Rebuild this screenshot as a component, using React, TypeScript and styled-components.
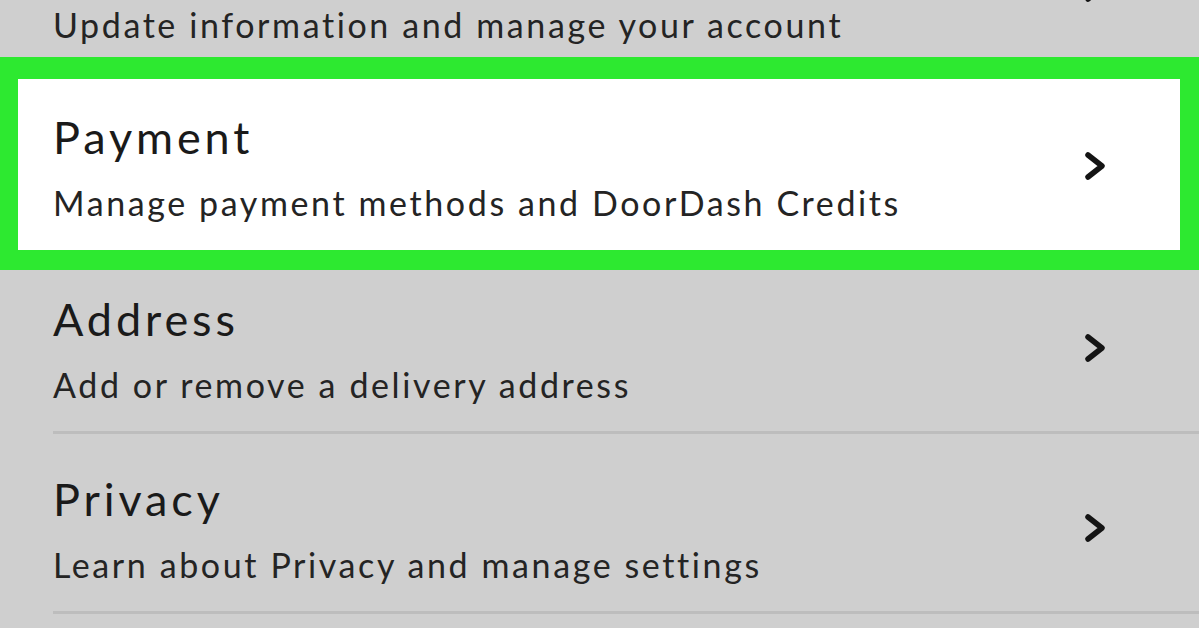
import React from 'react'
import styled, {createGlobalStyle} from 'styled-components'

const GlobalStyle = createGlobalStyle`
html, body {
  margin: 0;
  padding: 0;
  background: #cfcfcf;
}
body {
  font-family: Lato, "Noto Sans", sans-serif;
}
`

const items = [
  {title: 'Account', subtitle: 'Update information and manage your account'},
  {title: 'Payment', subtitle: 'Manage payment methods and DoorDash Credits', active: true},
  {title: 'Address', subtitle: 'Add or remove a delivery address'},
  {title: 'Privacy', subtitle: 'Learn about Privacy and manage settings'},
]

const Chevron = () => (
  <svg width="24" height="36" viewBox="0 0 24 36" fill="none">
    <polyline
      points="5,7 19,18 5,29"
      stroke="#141414"
      strokeWidth="5.5"
      strokeLinecap="round"
      strokeLinejoin="round"
    />
  </svg>
)

export default function App() {
  return (
    <>
      <GlobalStyle />
      <SScreen>
        <SList>
          {items.map((item, id) =>
            item.active ? (
              <SHighlight key={id}>
                <SRow $framed>
                  <SText>
                    <STitle>{item.title}</STitle>
                    <SSub>{item.subtitle}</SSub>
                  </SText>
                  <SArrow>
                    <Chevron />
                  </SArrow>
                </SRow>
              </SHighlight>
            ) : (
              <SRow key={id}>
                <SText>
                  <STitle>{item.title}</STitle>
                  <SSub>{item.subtitle}</SSub>
                </SText>
                <SArrow>
                  <Chevron />
                </SArrow>
              </SRow>
            )
          )}
        </SList>
      </SScreen>
    </>
  )
}

const SScreen = styled.div`
width: 1199px;
height: 628px;
overflow: hidden;
background: #cfcfcf;
`

const SList = styled.div`
display: flex;
flex-direction: column;
margin-top: -106px;
`

const SHighlight = styled.div`
position: relative;
z-index: 1;
margin: -17px 0 -16px;
border-style: solid;
border-color: #2de930;
border-width: 22px 19px 20px 18px;
background: #fff;
`

const SRow = styled.div<{$framed?: boolean}>`
box-sizing: border-box;
height: ${p => (p.$framed ? '171px' : '180px')};
margin-left: ${p => (p.$framed ? '35px' : '53px')};
padding: ${p => (p.$framed ? '31px 73px 0 0' : '38px 92px 0 0')};
border-bottom: ${p => (p.$framed ? 'none' : '3px solid #bdbdbd')};
display: grid;
grid-template-columns: 1fr auto;
`

const SText = styled.div`
display: flex;
flex-direction: column;
align-self: start;
white-space: nowrap;
`

const STitle = styled.div`
font-size: 45px;
line-height: 1.2;
letter-spacing: 3.9px;
color: #1a1a1a;
`

const SSub = styled.div`
margin-top: 19px;
font-size: 34px;
line-height: 1.2;
letter-spacing: 2.6px;
color: #242424;
`

const SArrow = styled.div`
margin-top: 38px;
width: 24px;
height: 36px;
`
